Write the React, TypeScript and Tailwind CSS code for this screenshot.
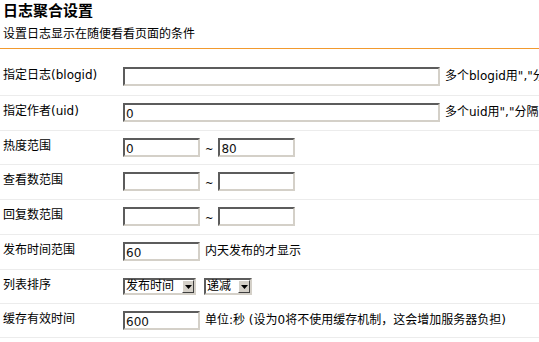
import React from "react";

const font = "font-['DejaVu_Sans','Noto_Sans_CJK_SC',sans-serif]";

const inputCls =
  "box-border h-[19px] border-2 border-t-[#5c5c5c] border-l-[#5c5c5c] border-b-[#d4d0c8] border-r-[#d4d0c8] bg-white px-[1px] pt-[3px] text-[12px] leading-[12px] text-[#111] outline-none";

function Field({ value = "", width }: { value?: string; width: string }) {
  return <input readOnly value={value} className={`${inputCls} ${width}`} />;
}

function Select({ value, width }: { value: string; width: string }) {
  return (
    <div
      className={`box-border flex h-[17px] items-stretch border-2 border-t-[#5c5c5c] border-l-[#5c5c5c] border-b-[#d4d0c8] border-r-[#d4d0c8] bg-white ${width}`}
    >
      <span className="flex-1 pl-[1px] text-[12px] leading-[13px] text-black">{value}</span>
      <span className="box-border flex w-[12px] items-center justify-center border border-t-white border-l-white border-b-[#404040] border-r-[#404040] bg-[#d4d0c8]">
        <svg width="7" height="4" viewBox="0 0 7 4">
          <path d="M0 0h7L3.5 4z" fill="#000" />
        </svg>
      </span>
    </div>
  );
}

function Tilde() {
  return <span className="mx-[5px] translate-y-[2px] text-[10px] leading-[10px]">~</span>;
}

const rows: { label: React.ReactNode; h: string; body: React.ReactNode }[] = [
  {
    label: "指定日志(blogid)",
    h: "h-[36px]",
    body: (
      <>
        <Field width="w-[317px]" />
        <span className="ml-[5px]">多个blogid用","分隔</span>
      </>
    ),
  },
  {
    label: "指定作者(uid)",
    h: "h-[35px]",
    body: (
      <>
        <Field value="0" width="w-[317px]" />
        <span className="ml-[5px]">多个uid用","分隔</span>
      </>
    ),
  },
  {
    label: "热度范围",
    h: "h-[34px]",
    body: (
      <>
        <Field value="0" width="w-[77px]" />
        <Tilde />
        <Field value="80" width="w-[77px]" />
      </>
    ),
  },
  {
    label: "查看数范围",
    h: "h-[35px]",
    body: (
      <>
        <Field width="w-[77px]" />
        <Tilde />
        <Field width="w-[77px]" />
      </>
    ),
  },
  {
    label: "回复数范围",
    h: "h-[35px]",
    body: (
      <>
        <Field width="w-[77px]" />
        <Tilde />
        <Field width="w-[77px]" />
      </>
    ),
  },
  {
    label: "发布时间范围",
    h: "h-[35px]",
    body: (
      <>
        <Field value="60" width="w-[77px]" />
        <span className="ml-[5px]">内天发布的才显示</span>
      </>
    ),
  },
  {
    label: "列表排序",
    h: "h-[34px]",
    body: (
      <div className="flex gap-[8px] pt-[1px]">
        <Select value="发布时间" width="w-[73px]" />
        <Select value="递减" width="w-[48px]" />
      </div>
    ),
  },
  {
    label: "缓存有效时间",
    h: "h-[34px]",
    body: (
      <>
        <Field value="600" width="w-[77px]" />
        <span className="ml-[5px]">单位:秒 (设为0将不使用缓存机制，这会增加服务器负担)</span>
      </>
    ),
  },
];

export default function App() {
  return (
    <div className={`h-[342px] w-[539px] overflow-hidden bg-white text-[12px] text-black ${font}`}>
      <div className="box-border h-[49px] border-b border-[#f29a2e] pl-[3px]">
        <h1 className="pt-[2px] text-[15px] font-bold leading-[18px]">日志聚合设置</h1>
        <p className="mt-[6px] leading-[16px]">设置日志显示在随便看看页面的条件</p>
      </div>
      <div className="mt-[11px] w-[800px]">
        {rows.map((r, i) => (
          <div
            key={i}
            className={`box-border flex items-start whitespace-nowrap border-b border-[#ececec] pt-[7px] ${r.h}`}
          >
            <div className="w-[123px] shrink-0 pl-[3px] leading-[17px]">{r.label}</div>
            <div className="flex items-center leading-[19px]">{r.body}</div>
          </div>
        ))}
      </div>
    </div>
  );
}
